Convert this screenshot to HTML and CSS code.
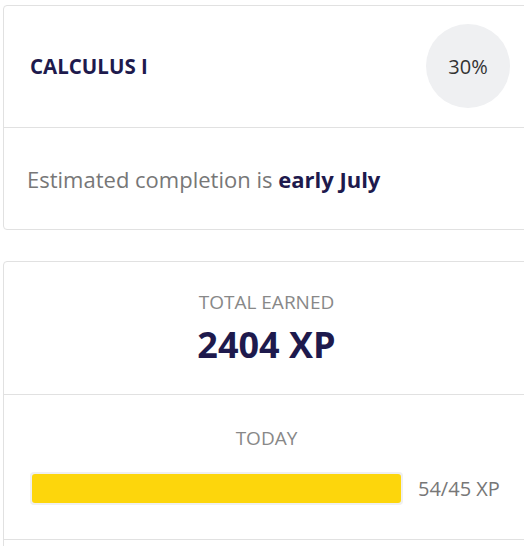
FILE: index.html
```html
<!DOCTYPE html>
<html lang="en">
<head>
    <meta charset="UTF-8">
    <meta name="viewport" content="width=device-width, initial-scale=1.0">
    <title>Course progress</title>
    <link rel="stylesheet" href="styles.css">
</head>
<body>
    <div class="page">
        <div class="card">
            <div class="course-header">
                <h2 class="course-title">CALCULUS I</h2>
                <div class="course-percent">30%</div>
            </div>
            <div class="course-body">
                <p class="estimate">Estimated completion is <strong>early July</strong></p>
            </div>
        </div>

        <div class="card xp-card">
            <div class="xp-section">
                <div class="xp-label">TOTAL EARNED</div>
                <div class="xp-total">2404 XP</div>
            </div>
            <div class="xp-section today">
                <div class="xp-label">TODAY</div>
                <div class="xp-row">
                    <div class="xp-bar">
                        <div class="xp-fill" style="width: 100%"></div>
                    </div>
                    <span class="xp-count">54/45 XP</span>
                </div>
            </div>
            <div class="xp-section"></div>
        </div>
    </div>
</body>
</html>
```

FILE: styles.css
```css
* {
    margin: 0;
    padding: 0;
    box-sizing: border-box;
    font-family: 'Trebuchet MS', 'Open Sans', sans-serif;
}

html, body {
    overflow: hidden;
    background: #fff;
}

/* the cards are wider than the window and run off its right edge */
.page {
    width: 600px;
    padding: 5px 0 0 3px;
}

.card {
    width: 560px;
    background: #fff;
    border: 1px solid #e1e1e1;
    border-radius: 4px;
}

.course-header {
    display: flex;
    align-items: center;
    justify-content: space-between;
    padding: 18px 52px 19px 26px;
    border-bottom: 1px solid #e1e1e1;
}

.course-title {
    font-size: 20.5px;
    font-weight: 700;
    color: #1e1a4d;
}

.course-percent {
    width: 84px;
    height: 84px;
    border-radius: 50%;
    background: #eff0f2;
    color: #333;
    font-size: 20px;
    display: flex;
    align-items: center;
    justify-content: center;
}

.course-body {
    padding: 37px 23px 36px;
}

.estimate {
    font-size: 22px;
    line-height: 28px;
    color: #777;
}

.estimate strong {
    color: #1e1a4d;
}

.xp-card {
    margin-top: 31px;
}

.xp-section {
    border-bottom: 1px solid #e1e1e1;
    text-align: center;
    padding: 27px 59px 27px 26px;
}

.xp-label {
    font-size: 19px;
    line-height: 26px;
    color: #888;
}

.xp-total {
    font-size: 36px;
    font-weight: 700;
    line-height: 44px;
    margin-top: 8px;
    color: #1e1a4d;
}

.today {
    padding: 30px 59px 34px 26px;
}

.xp-row {
    display: flex;
    align-items: center;
    gap: 15px;
    margin-top: 21px;
}

.xp-bar {
    width: 373px;
    height: 33px;
    padding: 2px;
    background: #f0f0f0;
    border-radius: 4px;
}

.xp-fill {
    height: 100%;
    background: #fdd60c;
    border-radius: 3px;
}

.xp-count {
    font-size: 20px;
    color: #777;
}
```
